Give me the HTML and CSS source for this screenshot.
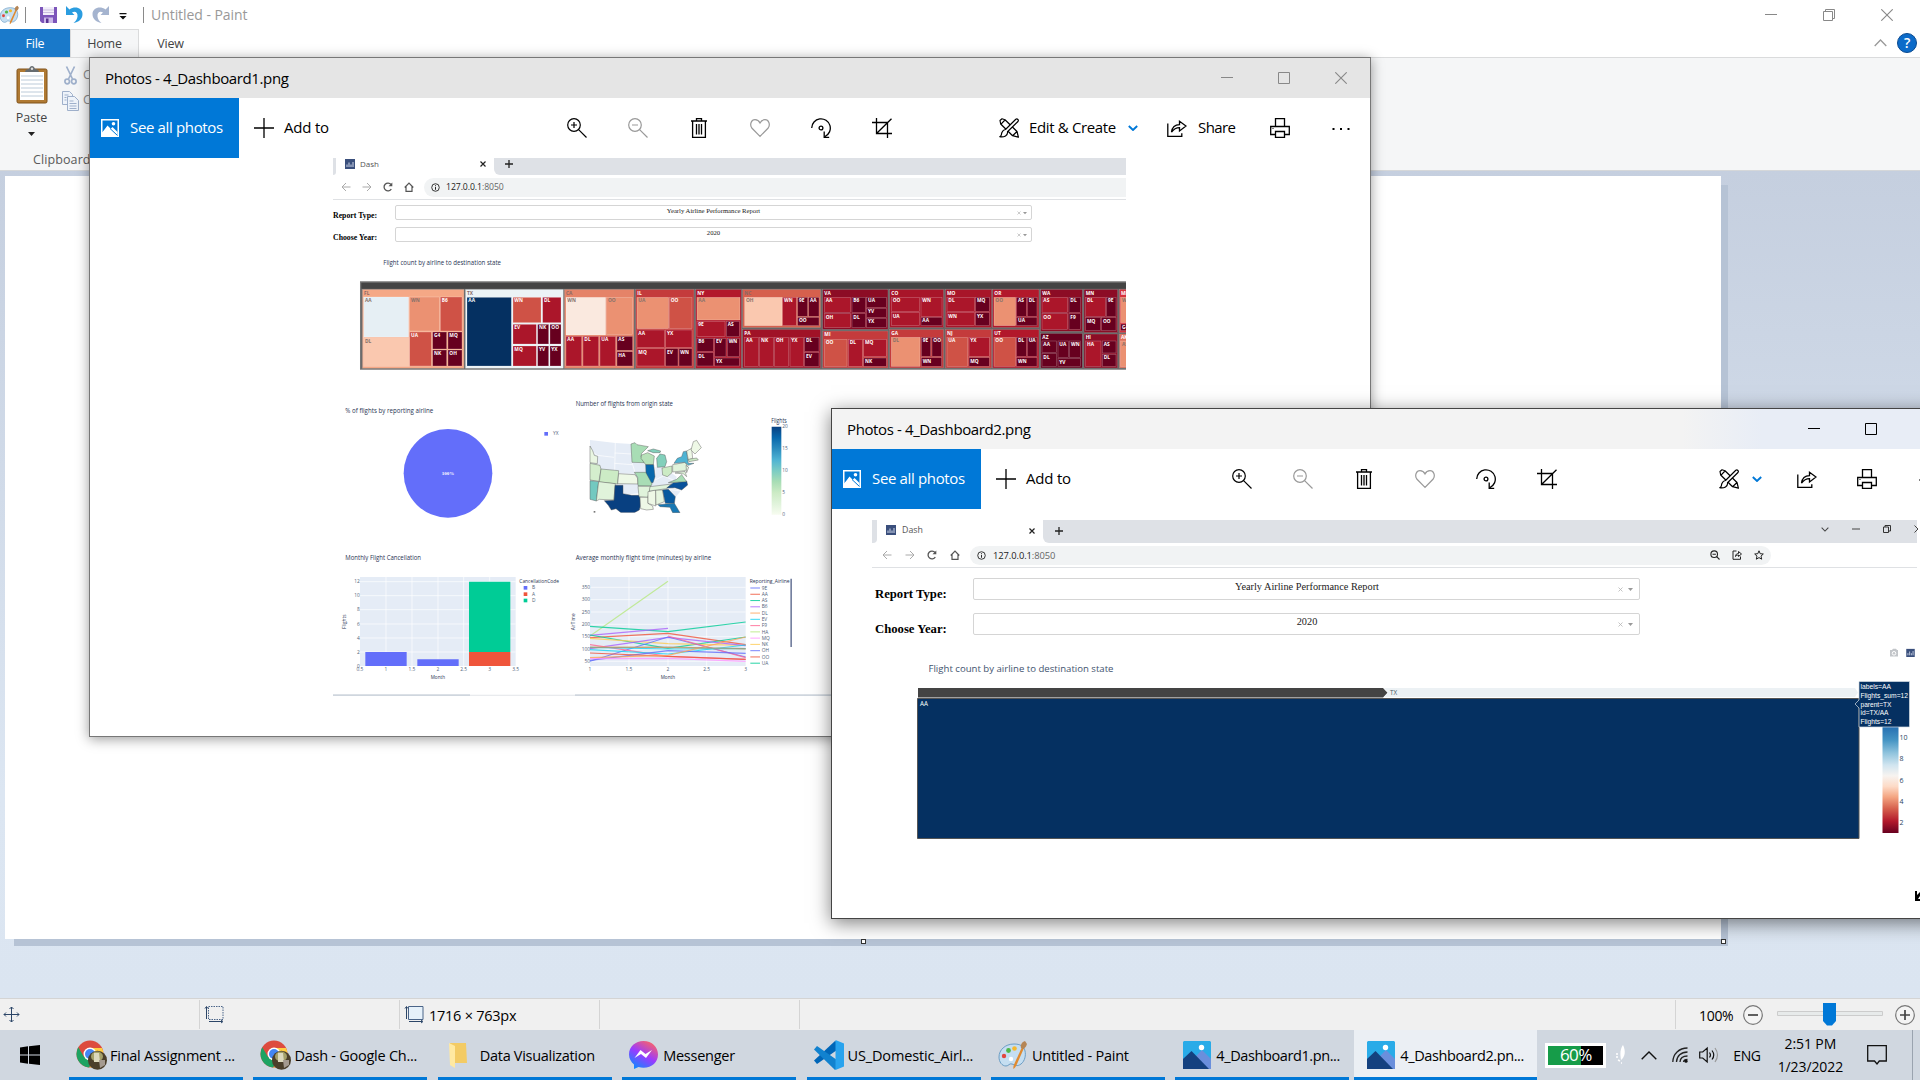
FILE: index.html
```html
<!DOCTYPE html>
<html lang="en">
<head>
<meta charset="utf-8">
<title>Untitled - Paint</title>
<link rel="stylesheet" href="styles.css">
</head>
<body>
<svg class="defs" width="0" height="0" aria-hidden="true">
  <defs>
    <symbol id="i-zoomin" viewBox="0 0 20 20"><g fill="none" stroke="currentColor" stroke-width="1.2"><circle cx="7" cy="7" r="6.3"/><path d="M11.6 11.6 19.5 19.5M7 4v6M4 7h6"/></g></symbol>
    <symbol id="i-zoomout" viewBox="0 0 20 20"><g fill="none" stroke="currentColor" stroke-width="1.2"><circle cx="7" cy="7" r="6.3"/><path d="M11.6 11.6 19.5 19.5M4 7h6"/></g></symbol>
    <symbol id="i-trash" viewBox="0 0 20 20"><g fill="none" stroke="currentColor" stroke-width="1.3"><path d="M2 3h16M7.500 3V.7h5V3M3.600 3v16.300h12.800V3M7.500 6v10.500M10 6v10.500M12.500 6v10.500"/></g></symbol>
    <symbol id="i-heart" viewBox="0 0 20 20"><path d="M10 18.300 1.800 10C-.6 6.500 1.300 1.700 5 1.700c2.300 0 4 1.200 5 3.200 1-2 2.700-3.200 5-3.200 3.700 0 5.600 4.800 3.200 8.300z" fill="none" stroke="currentColor" stroke-width="1.200"/></symbol>
    <symbol id="i-rotate" viewBox="0 0 20 20"><g fill="none" stroke="currentColor" stroke-width="1.300"><path d="M.7 10A9.300 9.300 0 1 1 14 18.500M13.200 13.500v5.800h5"/><circle cx="10" cy="10" r="1.900"/></g></symbol>
    <symbol id="i-crop" viewBox="0 0 20 20"><path d="M0 4.500h15.500V20M4.500 0v15.500H20M4.500 15.500 19.500.7" fill="none" stroke="currentColor" stroke-width="1.300"/></symbol>
    <symbol id="i-edit" viewBox="0 0 20 20"><g fill="#fff" stroke="currentColor" stroke-width="1.200" stroke-linejoin="round"><path d="M1 2.500 3 .8l3 1L18 13.500l1.400 5.700-5.800-1.500L1.700 6zM13.600 17.700 18 13.500M2 6.200 6 2"/><path d="M6.500 11.500 16.800 1.300c1.500-1 3.300.7 2.200 2.200L8.500 13.700c.7 3.500-3.500 6-7.800 5 2.300-.7 1.300-2 2.200-4.200.7-1.700 2-2.800 3.600-3z"/></g></symbol>
    <symbol id="i-share" viewBox="0 0 20 20"><path d="M.8 5.500v12.800h14v-3M4.500 14.200c.7-5 3.500-7.500 8-7.500V3.200L19 8l-6.500 5v-3.300c-3.500 0-5.700 1.300-8 4.500z" fill="none" stroke="currentColor" stroke-width="1.300"/></symbol>
    <symbol id="i-print" viewBox="0 0 20 20"><g fill="#fff" stroke="currentColor" stroke-width="1.300"><path d="M5.500 9V.7h9V9M.7 8.500h18.600v8H.7z"/><path d="M5.500 13.500h9v5.800h-9z"/></g><path d="M2.500 10.500h1" stroke="currentColor"/></symbol>
    <symbol id="i-plus" viewBox="0 0 20 20"><path d="M10 0v20M0 10h20" stroke="currentColor" stroke-width="1.300"/></symbol>
    <symbol id="i-plus-bold" viewBox="0 0 8 8"><path d="M4 0v8M0 4h8" stroke="currentColor" stroke-width="1.300"/></symbol>
    <symbol id="i-x-bold" viewBox="0 0 6 6"><path d="m.5.5 5 5m0-5-5 5" stroke="currentColor" stroke-width="1.200"/></symbol>
    <symbol id="i-more" viewBox="0 0 20 20"><path d="M1.500 11h2M9 11h2M16.500 11h2" stroke="currentColor" stroke-width="2"/></symbol>
    <symbol id="i-photo" viewBox="0 0 18 18"><path d="M0 0h18v18H0zM1.500 1.500v12L6.500 6.500l9.500 9.500h.5V1.500z" fill="#fff" fill-rule="evenodd"/><path d="m1.500 13 5-5.500L16 16.500H1.500z" fill="#fff"/><circle cx="12.500" cy="4.700" r="1.800" fill="#fff"/><path d="m9.500 10 2-2 5 5v3.500z" fill="#fff"/><path d="m9 9.500 7.500 7" stroke="#0078d7"/></symbol>
    <symbol id="i-chev" viewBox="0 0 10 6"><path d="m.8 1 4.200 4 4.200-4" fill="none" stroke="currentColor" stroke-width="1.900"/></symbol>
    <symbol id="i-min" viewBox="0 0 12 12"><path d="M0 5.500h12" stroke="currentColor"/></symbol>
    <symbol id="i-max" viewBox="0 0 12 12"><path d="M.5.5h11v11H.5z" fill="none" stroke="currentColor"/></symbol>
    <symbol id="i-restore" viewBox="0 0 12 12"><path d="M.5 2.500h9v9h-9zM2.500 2.500v-2h9v9h-2" fill="none" stroke="currentColor"/></symbol>
    <symbol id="i-close" viewBox="0 0 12 12"><path d="m.3.3 11.400 11.400M11.700.3.3 11.700" stroke="currentColor" stroke-width="1.100"/></symbol>
    <symbol id="i-dash" viewBox="0 0 10 10"><path d="M0 0h10v10H0z" fill="#3a4f7c"/><path d="M2 8V5.500M4 8V3.500M6 8V5.500M8 8V3" stroke="#cfd8ea" stroke-width="1"/></symbol>
    <symbol id="i-back" viewBox="0 0 10 10"><path d="M9.500 5H1M5 1 1 5l4 4" fill="none" stroke="currentColor"/></symbol>
    <symbol id="i-fwd" viewBox="0 0 10 10"><path d="M.5 5H9M5 1l4 4-4 4" fill="none" stroke="currentColor"/></symbol>
    <symbol id="i-reload" viewBox="0 0 10 10"><path d="M8.300 7A3.900 3.900 0 1 1 8 2.500" fill="none" stroke="currentColor" stroke-width="1.300"/><path d="M9.300.5V4.300H5.500z" fill="currentColor"/></symbol>
    <symbol id="i-home" viewBox="0 0 10 10"><path d="M2 4.500V9.300h6V4.500M.7 5.500 5 1.200l4.300 4.300" fill="none" stroke="currentColor" stroke-width="1.200"/></symbol>
    <symbol id="i-info" viewBox="0 0 10 10"><circle cx="5" cy="5" r="4.200" fill="none" stroke="currentColor"/><path d="M5 4.500v3M5 2.500v1.100" stroke="currentColor" stroke-width="1.100"/></symbol>
    <symbol id="i-star" viewBox="0 0 10 10"><path d="m5 .8 1.200 2.900 3.100.3L7 6.100l.7 3.100L5 7.600 2.300 9.200 3 6.100.7 4l3.100-.3z" fill="none" stroke="currentColor"/></symbol>
    <symbol id="i-palette" viewBox="0 0 30 30"><path d="M16 4C7 4 1 10 1 17c0 5 3 9 7 9 3 0 3-3 6-2 3 1 5 3 9 0 4-3 5-9 4-13-1-5-5-7-11-7z" fill="#c5def1" stroke="#6b9dc4"/><circle cx="6" cy="16" r="2.200" fill="#e2463e"/><circle cx="10.500" cy="10.500" r="2.400" fill="#4fb848"/><circle cx="16.500" cy="8.500" r="2.300" fill="#f5b92e"/><circle cx="13" cy="19" r="2.200" fill="#fff"/><path d="M15.500 29c-.5-2 .3-4 1.200-6L24 7l2 1-7 16c-1 2-2 4-3.500 5z" fill="#e08a30"/><path d="M23 8c-1-3 1-6 4-7l2 3c-1 3-2 4-4 5z" fill="#b58555"/></symbol>
    <symbol id="i-chrome" viewBox="0 0 32 30"><circle cx="14" cy="14" r="13.500" fill="#dd4b3e"/><path d="M2.300 7.300A13.500 13.500 0 0 0 13 27.500L18 19 8 17z" fill="#1da362"/><path d="M14 8h12a13.500 13.500 0 0 1-12.500 19.500L20 17z" fill="#ffcd41"/><circle cx="14" cy="14" r="6.500" fill="#fff"/><circle cx="14" cy="14" r="5" fill="#4486f4"/><circle cx="21.500" cy="20.300" r="9.500" fill="#4b3f2b"/><ellipse cx="21" cy="16.500" rx="6" ry="5" fill="#a4a06a"/><path d="M18 13h5l1 9h-6z" fill="#dcd8bd"/><path d="M23 20h6v5l-5 3z" fill="#a49a90"/></symbol>
    <symbol id="i-photos" viewBox="0 0 28 28"><path d="M1 0h26l1 1v26l-1 1H1l-1-1V1z" fill="#29abe8"/><path d="m13 15 6-6 9 9v10H15z" fill="#6a8fdc"/><path d="M0 18 8.500 10 26 28H0z" fill="#14417f"/><circle cx="18.500" cy="6.500" r="2.700" fill="#fff"/></symbol>
  </defs>
</svg>

<div class="desktop">
  <div class="paint">
    <div class="paint-title">
      <svg class="p-logo" width="21" height="20"><use href="#i-palette"/></svg>
      <i class="vline"></i>
      <svg class="p-save" width="17" height="16" viewBox="0 0 17 16"><path d="M0 0h17v16H2l-2-2z" fill="#7c55ba"/><path d="M3 0h11v8H3z" fill="#f2eefa"/><path d="M3 3h11M3 5.500h11" stroke="#c9bde0"/><path d="M4 10.500h9V16H4z" fill="#cbb9e8"/><path d="M6 11.500h2.500V16H6z" fill="#5a3494"/></svg>
      <svg class="p-undo" width="17" height="19" viewBox="0 0 17 19"><path d="M0 1v9h8.500L6 7.500c3-2 6 0 5.500 4-.3 2.500-1.500 4.500-4 6.500 6-1 9-4.500 9-9C16.500 3 9 .5 3.500 4.500z" fill="#2b9de0"/></svg>
      <svg class="p-redo" width="17" height="19" viewBox="0 0 17 19"><path d="M17 1v9H8.500L11 7.500c-3-2-6 0-5.500 4 .3 2.500 1.500 4.500 4 6.500-6-1-9-4.500-9-9C.5 3 8 .5 13.500 4.500z" fill="#a5b4cf"/></svg>
      <svg class="p-qat" width="8" height="7" viewBox="0 0 8 7"><path d="M.5 0h7v1.200h-7zM.5 3h7L4 6.500z" fill="#111"/></svg>
      <i class="vline"></i>
      <span class="p-name">Untitled - Paint</span>
      <div class="p-caption">
        <svg width="12" height="12"><use href="#i-min"/></svg><svg width="12" height="12"><use href="#i-restore"/></svg><svg width="12" height="12"><use href="#i-close"/></svg>
      </div>
    </div>
    <div class="tabs">
      <div class="tab file">File</div><div class="tab home">Home</div><div class="tab view">View</div>
      <div class="tabs-end">
        <svg width="13" height="8" viewBox="0 0 13 8"><path d="m.7 7 5.800-6 5.800 6" fill="none" stroke="#999" stroke-width="1.300"/></svg>
        <span class="help">?</span>
      </div>
    </div>
    <div class="ribbon">
      <div class="paste">
        <svg width="32" height="38" viewBox="0 0 32 38"><rect x="1" y="3" width="30" height="34" rx="1.500" fill="#b07a33" stroke="#80531b"/><path d="M4 6h24v28H4z" fill="#fff"/><path d="M5 10h22M5 14h22M5 18h22M5 22h22M5 26h22M5 30h22" stroke="#bccbd9"/><path d="M9 6c0-2 2-3 4-3 1-4 5-4 6 0 2 0 4 1 4 3z" fill="#666c70"/><circle cx="16" cy="2.800" r="1.200" fill="#ddd"/></svg>
        <span>Paste</span>
        <svg width="7" height="4" viewBox="0 0 7 4"><path d="M0 0h7L3.500 4z" fill="#222"/></svg>
      </div>
      <div class="clip-cmds">
        <div><svg width="13" height="19" viewBox="0 0 13 19"><g fill="none" stroke="#9fb0cb" stroke-width="1.700"><path d="M2.500.5 8.500 13M10.500.5 4.500 13"/><circle cx="3.200" cy="15.500" r="2.300"/><circle cx="9.800" cy="15.500" r="2.300"/></g></svg><span>Cut</span></div>
        <div class="copy"><svg width="17" height="20" viewBox="0 0 17 20"><g fill="#eef3fa" stroke="#9fb0cb"><path d="M.5.500h7l3 3v10H.5z"/><path d="M5.500 5.500h7l4 4v10h-11z"/></g><path d="M7.500 10h4M7.500 12.500h7M7.500 15h7M7.500 17.500h7M2.500 4h4M2.500 6.500h2M2.500 9h2" stroke="#9fb0cb"/></svg><span>Copy</span></div>
      </div>
      <span class="group-name">Clipboard</span>
    </div>
    <div class="workspace">
      <div class="canvas"></div>
      <i class="handle h-mid"></i><i class="handle h-corner"></i>
    </div>
    <div class="status">
      <div class="cell"><svg width="17" height="17" viewBox="0 0 17 17"><path d="M8.500 1v15M1 8.500h15M6.500 3l2-2 2 2M6.500 14l2 2 2-2M3 6.500l-2 2 2 2M14 6.500l2 2-2 2" fill="none" stroke="#2c4668"/></svg></div>
      <div class="cell"><svg width="19" height="17" viewBox="0 0 19 17"><path d="M3.500.5h14.500v13H3.500z" fill="none" stroke="#4a6488" stroke-dasharray="1.500 1"/><path d="M1.500 1v12M4 15.500h13M0 2.500l1.500-2 1.500 2M16 14l2 1.500-2 1.500" fill="none" stroke="#2c4668"/></svg></div>
      <div class="cell"><svg width="19" height="17" viewBox="0 0 19 17"><path d="M3.500.5h14.500v13H3.500z" fill="#e6f1fa" stroke="#4a6488"/><path d="M1.500 1v12M4 15.500h13M0 2.500l1.500-2 1.500 2M16 14l2 1.500-2 1.500" fill="none" stroke="#2c4668"/></svg><span>1716 × 763px</span></div>
      <div class="cell"></div>
      <div class="cell wide"></div>
      <div class="zoom">
        <span>100%</span>
        <svg width="20" height="20" viewBox="0 0 20 20"><circle cx="10" cy="10" r="9.300" fill="#f4f4f4" stroke="#777" stroke-width="1.200"/><path d="M5 10h10" stroke="#444" stroke-width="1.700"/></svg>
        <svg class="slider" width="106" height="23" viewBox="0 0 106 23"><path d="M.5 8.500h105v4H.5z" fill="#e7eaea" stroke="#ccc"/><path d="M46 0h13v18l-4 4.500h-5L46 18z" fill="#0078d7"/></svg>
        <svg width="20" height="20" viewBox="0 0 20 20"><circle cx="10" cy="10" r="9.300" fill="#f4f4f4" stroke="#777" stroke-width="1.200"/><path d="M5 10h10M10 5v10" stroke="#444" stroke-width="1.700"/></svg>
      </div>
    </div>
  </div>

  <div class="window win1">
    <div class="win-title"><span>Photos - 4_Dashboard1.png</span>
      <div class="caption"><svg width="12" height="12"><use href="#i-min"/></svg><svg width="12" height="12"><use href="#i-max"/></svg><svg width="12" height="12"><use href="#i-close"/></svg></div>
    </div>
    <div class="toolbar">
      <div class="see-all"><svg width="18" height="18"><use href="#i-photo"/></svg><span>See all photos</span></div>
      <div class="add-to"><svg width="20" height="20"><use href="#i-plus"/></svg><span>Add to</span></div>
      <div class="tools">
        <b><svg width="20" height="20"><use href="#i-zoomin"/></svg></b><b class="off"><svg width="20" height="20"><use href="#i-zoomout"/></svg></b><b><svg width="20" height="20"><use href="#i-trash"/></svg></b><b class="off"><svg width="20" height="20"><use href="#i-heart"/></svg></b><b><svg width="20" height="20"><use href="#i-rotate"/></svg></b><b><svg width="20" height="20"><use href="#i-crop"/></svg></b>
      </div>
      <div class="actions">
        <svg width="20" height="20"><use href="#i-edit"/></svg><span class="t-edit">Edit &amp; Create</span><svg class="chev" width="10" height="6"><use href="#i-chev"/></svg>
        <svg class="a-share" width="20" height="20"><use href="#i-share"/></svg><span class="t-share">Share</span>
        <svg class="a-print" width="20" height="20"><use href="#i-print"/></svg>
        <svg class="a-more" width="20" height="20"><use href="#i-more"/></svg>
      </div>
    </div>
    <div class="photo photo1">
      <div class="strip"><i class="prev"></i>
        <div class="btab"><svg width="10" height="10"><use href="#i-dash"/></svg><span>Dash</span><svg class="x" width="6" height="6"><use href="#i-x-bold"/></svg></div>
        <div class="rest"><svg width="8" height="8"><use href="#i-plus-bold"/></svg></div>
      </div>
      <div class="nav">
        <svg class="dim" width="10" height="10"><use href="#i-back"/></svg><svg class="dim" width="10" height="10"><use href="#i-fwd"/></svg><svg width="10" height="10"><use href="#i-reload"/></svg><svg width="10" height="10"><use href="#i-home"/></svg>
        <div class="pill"><svg width="9" height="9"><use href="#i-info"/></svg><span>127.0.0.1<em>:8050</em></span></div>
      </div>
      <div class="form">
        <label>Report Type:</label><div class="select"><span>Yearly Airline Performance Report</span><svg width="10" height="4" viewBox="0 0 10 4"><path d="m.5.5 3 3m0-3-3 3" stroke="#aaa" stroke-width=".6"/><path d="M6 1h4L8 3.300z" fill="#999"/></svg></div>
        <label>Choose Year:</label><div class="select"><span>2020</span><svg width="10" height="4" viewBox="0 0 10 4"><path d="m.5.5 3 3m0-3-3 3" stroke="#aaa" stroke-width=".6"/><path d="M6 1h4L8 3.300z" fill="#999"/></svg></div>
      </div>
      <svg class="charts" width="793" height="452" viewBox="333 246 793 452">
        <g transform="translate(320 150) scale(.33333)">
          <text class="ct" x="190" y="344" textLength="353" lengthAdjust="spacingAndGlyphs">Flight count by airline to destination state</text>
          <path d="M120 394h2298v265H120z" fill="#777"/><path d="M124 398h2294v258H124z" fill="#666"/><path d="M124 398h2294v18H124z" fill="#444"/>
          <svg x="120" y="394" width="2298" height="265" viewBox="120 394 2298 265"><g id="treemap"></g></svg>
        </g>
        <g id="lower" transform="translate(320 380) scale(.33333)">
          <defs>
            <linearGradient id="gnbu" x2="0" y2="1"><stop offset="0" stop-color="#084081"/><stop offset=".125" stop-color="#0868ac"/><stop offset=".25" stop-color="#2b8cbe"/><stop offset=".375" stop-color="#4eb3d3"/><stop offset=".5" stop-color="#7bccc4"/><stop offset=".625" stop-color="#a8ddb5"/><stop offset=".75" stop-color="#ccebc5"/><stop offset=".875" stop-color="#e0f3db"/><stop offset="1" stop-color="#f7fcf0"/></linearGradient>
          </defs>
          <text class="ct" x="76" y="98" textLength="264" lengthAdjust="spacingAndGlyphs">% of flights by reporting airline</text>
          <circle cx="384" cy="280" r="133" fill="#636efa"/>
          <text x="384" y="286" class="pct" text-anchor="middle">100%</text>
          <path d="M673 156h11v11h-11z" fill="#636efa"/><text class="tick" x="699" y="166">YX</text>

          <text class="ct" x="767" y="79" textLength="292" lengthAdjust="spacingAndGlyphs">Number of flights from origin state</text>
          <g stroke-linejoin="round">
            <path d="M810 180 886 189 935 192 938 247 975 250 980 270 1004 262 1026 262 1030 288 1056 280 1070 290 1066 308 1060 325 1083 332 1066 352 1040 330 909 345 884 312 810 300z" fill="#e5ecf6"/>
            <path d="M886 189 884 272M884 219 934 222M883 250 937 254M812 212 832 226 882 232M936 247 945 277M896 281 945 283M832 250 832 266M1005 262 1005 300M1005 300 1030 288 1060 300M1044 328l40 5" stroke="#fff" stroke-width="2" fill="none"/>
            <g stroke="#555" stroke-width="1.300">
              <path d="m810 198 8 14 5 14 10 3-1 22-22-3z" fill="#e9f6e2"/><path d="m810 250 30 6 3 12-6 36-27-4z" fill="#d4eecd"/><path d="m843 267 53 5-3 40-55-6z" fill="#ccebc5"/><path d="m810 302 26 3-7 58-19-5z" fill="#73c9c0"/><path d="m836 305 50 6-4 49-44-2-9 5z" fill="#e0f3db"/><path d="m896 281 49 3 8 11 1 17-61-1z" fill="#eef8e6"/>
              <path d="M885 316h24v25l26 5 23 0 3 14 0 18-3 12-15 8h-40l-15-12-14 4-9-14-12-14 29-1z" fill="#084081"/>
              <path d="m933 192 12-4 6 6 34 6-20 20-2 10 10 18-37-1z" fill="#a8ddb5"/><path d="m965 225 18-7 20 10-3 26h-23l-14-19z" fill="#b7e2b9"/><path d="M977 254h24l4 36-6 18-9 0-12-28z" fill="#0868ac"/><path d="m943 277 34 0 13 23 6 12-3 6-39-1-1-25z" fill="#a8ddb5"/><path d="m1012 262-2-27 10-13 15 3 5 20-5 15z" fill="#82d0bb"/><path d="m983 212 17-5 22 6-2 5h-20z" fill="#82d0bb"/>
              <path d="M954 319h38l-4 17-5 16-26-2z" fill="#e0f3db"/><path d="M960 352h24v18l14 8 2 10-20 2-18-4z" fill="#eef8e6"/><path d="m984 335 23-5v48l-23-8z" fill="#eef8e6"/><path d="m1007 330 21 0 5 35-25 10z" fill="#e6f5df"/><path d="m990 320 65-8-15 14-52 7z" fill="#e0f3db"/><path d="m1028 330 17-2 21 22-3 20h-27z" fill="#085a9f"/><path d="m1014 374 49-4 17 28h-22l-8-16-30-2z" fill="#1878b4"/><path d="m1040 324 20-16 40-5 3 12-18 15-20-7z" fill="#08519a"/><path d="m1045 308 25-10 15-14 15 21z" fill="#a8ddb5"/><path d="m1026 264 30-6v20l-14 12-14-5z" fill="#ccebc5"/><path d="m1058 254 38-7 8 15-8 10-38 4z" fill="#e0f3db"/><path d="m1062 250 10-15 13-5 5-15 10-2 5 37h17l-17 6-11-9z" fill="#4eb3d3"/><path d="m1098 256 8 6-6 16z" fill="#e6f5df"/><path d="m1100 213 15-8 3 30-13 5z" fill="#eef8e6"/><path d="m1113 210 7-25 10-4 14 22-19 19z" fill="#eef8e6"/><path d="m1105 238 25-4 5 6-28 5z" fill="#ccebc5"/><path d="m1065 279 30-5 5 16-9-8z" fill="#e0f3db"/>
            </g>
            <path d="M821 393h5v5h-5z" fill="#777"/><path d="M1040 399h45v5h-45zM880 398.500h80v5h-80z" fill="#fff"/>
          </g>
          <text class="ct" x="1354" y="130" textLength="46" lengthAdjust="spacingAndGlyphs">Flights</text>
          <path d="M1355 140h29v264h-29z" fill="url(#gnbu)"/>
          <g class="tick"><text x="1387" y="145">20</text><text x="1387" y="211">15</text><text x="1387" y="277">10</text><text x="1387" y="343">5</text><text x="1387" y="409">0</text></g>

          <text class="ct" x="76" y="541" textLength="227" lengthAdjust="spacingAndGlyphs">Monthly Flight Cancellation</text>
          <path d="M120 591h467v267H120z" fill="#e5ecf6"/>
          <path d="M120 605h467M120 647h467M120 689h467M120 732h467M120 774h467M120 816h467M198 591v267M276 591v267M354 591v267M431 591v267M509 591v267" stroke="#fff" stroke-width="2"/>
          <path d="M136 816h124v42H136zM292 838h124v20H292z" fill="#636efa"/><path d="M447 816h124v42H447z" fill="#ef553b"/><path d="M447 605h124v211H447z" fill="#00cc96"/>
          <g class="tick" text-anchor="end"><text x="119" y="610">12</text><text x="119" y="652">10</text><text x="119" y="694">8</text><text x="119" y="737">6</text><text x="119" y="779">4</text><text x="119" y="821">2</text><text x="119" y="863">0</text></g>
          <g class="tick" text-anchor="middle"><text x="120" y="872">0.5</text><text x="198" y="872">1</text><text x="276" y="872">1.5</text><text x="354" y="872">2</text><text x="431" y="872">2.5</text><text x="509" y="872">3</text><text x="587" y="872">3.5</text></g>
          <text class="ct ax" x="332" y="898" textLength="43" lengthAdjust="spacingAndGlyphs">Month</text><text class="ct ax" transform="translate(79 747) rotate(-90)" textLength="44" lengthAdjust="spacingAndGlyphs">Flights</text>
          <text class="ct ax" x="598" y="609" textLength="119" lengthAdjust="spacingAndGlyphs">CancellationCode</text>
          <path d="M611 618h11v11h-11z" fill="#636efa"/><path d="M611 637h11v11h-11z" fill="#ef553b"/><path d="M611 656h11v11h-11z" fill="#00cc96"/>
          <g class="tick"><text x="636" y="628">B</text><text x="636" y="647">A</text><text x="636" y="666">D</text></g>

          <text class="ct" x="767" y="541" textLength="407" lengthAdjust="spacingAndGlyphs">Average monthly flight time (minutes) by airline</text>
          <path d="M810 591h467v267H810z" fill="#e5ecf6"/>
          <path d="M810 622h467M810 659h467M810 696h467M810 733h467M810 770h467M810 807h467M810 844h467M927 591v267M1044 591v267M1160 591v267" stroke="#fff" stroke-width="2"/>
          <g id="airtime" fill="none" stroke-width="3.400" stroke-opacity=".8"></g>
          <g class="tick" text-anchor="end"><text x="810" y="627">350</text><text x="810" y="664">300</text><text x="810" y="701">250</text><text x="810" y="738">200</text><text x="810" y="775">150</text><text x="810" y="812">100</text><text x="810" y="849">50</text></g>
          <g class="tick" text-anchor="middle"><text x="810" y="872">1</text><text x="927" y="872">1.5</text><text x="1044" y="872">2</text><text x="1160" y="872">2.5</text><text x="1277" y="872">3</text></g>
          <text class="ct ax" x="1022" y="898" textLength="43" lengthAdjust="spacingAndGlyphs">Month</text><text class="ct ax" transform="translate(765 751) rotate(-90)" textLength="51" lengthAdjust="spacingAndGlyphs">AirTime</text>
          <text class="ct ax" x="1289" y="609" textLength="120" lengthAdjust="spacingAndGlyphs">Reporting_Airline</text>
          <g id="legend" class="tick"></g>
          <path d="M1411 596h5v205h-5z" fill="#7580a0"/>
          <path d="M39 943h411v5H39zM765 943h800v5H765z" fill="#cfd6de"/><path d="M450 944h315v3H450z" fill="#e2e5e9"/>
        </g>
      </svg>
    </div>
  </div>

  <div class="window win2">
    <div class="win-title"><span>Photos - 4_Dashboard2.png</span>
      <div class="caption"><svg width="12" height="12"><use href="#i-min"/></svg><svg width="12" height="12"><use href="#i-max"/></svg></div>
    </div>
    <div class="toolbar">
      <div class="see-all"><svg width="18" height="18"><use href="#i-photo"/></svg><span>See all photos</span></div>
      <div class="add-to"><svg width="20" height="20"><use href="#i-plus"/></svg><span>Add to</span></div>
      <div class="tools">
        <b><svg width="20" height="20"><use href="#i-zoomin"/></svg></b><b class="off"><svg width="20" height="20"><use href="#i-zoomout"/></svg></b><b><svg width="20" height="20"><use href="#i-trash"/></svg></b><b class="off"><svg width="20" height="20"><use href="#i-heart"/></svg></b><b><svg width="20" height="20"><use href="#i-rotate"/></svg></b><b><svg width="20" height="20"><use href="#i-crop"/></svg></b>
      </div>
      <div class="actions">
        <svg width="20" height="20"><use href="#i-edit"/></svg><svg class="chev" width="10" height="6"><use href="#i-chev"/></svg>
        <svg class="a-share" width="20" height="20"><use href="#i-share"/></svg>
        <svg class="a-print" width="20" height="20"><use href="#i-print"/></svg>
        <svg class="a-more" width="20" height="20"><use href="#i-more"/></svg>
      </div>
    </div>
    <div class="photo photo2">
      <div class="strip"><i class="prev"></i>
        <div class="btab"><svg width="10" height="10"><use href="#i-dash"/></svg><span>Dash</span><svg class="x" width="6" height="6"><use href="#i-x-bold"/></svg></div>
        <div class="rest"><svg width="8" height="8"><use href="#i-plus-bold"/></svg>
          <div class="strip-caption"><svg width="8" height="5" viewBox="0 0 10 6"><path d="m.8.8 4.200 4.200L9.200.8" fill="none" stroke="#444" stroke-width="1.300"/></svg><svg width="8" height="8" viewBox="0 0 8 8"><path d="M0 4h8" stroke="#444"/></svg><svg width="8" height="8" viewBox="0 0 8 8"><path d="M.5 2h5v5.500h-5zM2 2V.5h5.500V6H5.500" fill="none" stroke="#333"/></svg><svg width="5" height="8" viewBox="0 0 5 8"><path d="m.5.500 3.500 3.500L.5 7.500" fill="none" stroke="#444"/></svg></div>
        </div>
      </div>
      <div class="nav">
        <svg class="dim" width="10" height="10"><use href="#i-back"/></svg><svg class="dim" width="10" height="10"><use href="#i-fwd"/></svg><svg width="10" height="10"><use href="#i-reload"/></svg><svg width="10" height="10"><use href="#i-home"/></svg>
        <div class="pill"><svg width="9" height="9"><use href="#i-info"/></svg><span>127.0.0.1<em>:8050</em></span>
          <div class="pill-end"><svg width="10" height="10" viewBox="0 0 10 10"><g fill="none" stroke="currentColor" stroke-width="1.100"><circle cx="4.200" cy="4.200" r="3.300"/><path d="m6.700 6.700 2.800 2.800M2.500 4.200h3.400"/></g></svg><svg width="10" height="10" viewBox="0 0 10 10"><path d="M4.500 1H1v8.300h7.500V6.500M3.500 6.500c.2-2.500 1.500-3 3-3V1.500L9.500 4 6.500 6.500V5c-1.200 0-2 .3-3 1.500z" fill="none" stroke="currentColor"/></svg><svg width="10" height="10"><use href="#i-star"/></svg></div>
        </div>
      </div>
      <div class="form">
        <label>Report Type:</label><div class="select"><span>Yearly Airline Performance Report</span><svg width="15" height="5" viewBox="0 0 15 5"><path d="m.5.500 4 4m0-4-4 4" stroke="#b5b5b5" stroke-width=".8"/><path d="M10 1h5l-2.500 3z" fill="#999"/></svg></div>
        <label>Choose Year:</label><div class="select"><span>2020</span><svg width="15" height="5" viewBox="0 0 15 5"><path d="m.5.500 4 4m0-4-4 4" stroke="#b5b5b5" stroke-width=".8"/><path d="M10 1h5l-2.500 3z" fill="#999"/></svg></div>
      </div>
      <svg class="charts" width="1048" height="270" viewBox="872 640 1048 270">
        <defs><linearGradient id="rdbu" x2="0" y2="1"><stop offset="0" stop-color="#2670b2"/><stop offset=".12" stop-color="#4393c3"/><stop offset=".25" stop-color="#92c5de"/><stop offset=".36" stop-color="#d1e5f0"/><stop offset=".46" stop-color="#f7f3f0"/><stop offset=".56" stop-color="#fddbc7"/><stop offset=".66" stop-color="#f4a582"/><stop offset=".77" stop-color="#d6604d"/><stop offset=".89" stop-color="#b2182b"/><stop offset="1" stop-color="#67001f"/></linearGradient></defs>
        <path d="M1890 650h2l1-1.300h3l1 1.300h1v6.500h-8z" fill="#c2c5c9"/><circle cx="1894" cy="653.300" r="1.800" fill="none" stroke="#fff"/>
        <svg x="1906" y="648.500" width="9" height="8.500"><use href="#i-dash" width="9" height="8.500"/></svg>
        <text class="title2" x="928.500" y="672" textLength="185" lengthAdjust="spacingAndGlyphs">Flight count by airline to destination state</text>
        <path d="M918 688h465l4.500 4.700-4.500 4.800H918z" fill="#444"/><path d="M1384 688h471l3 4.500-3 4.500h-471l4-4.500z" fill="#ecf1f4"/>
        <text class="lab2" x="1390" y="695" fill="#456">TX</text>
        <path d="M917.500 698.500h941.500v140H917.500z" fill="#053061" stroke="#555"/>
        <text class="lab2" x="920" y="706" fill="#fff">AA</text>
        <path d="M1882.500 727h16v106h-16z" fill="url(#rdbu)"/>
        <g class="bar2"><text x="1899.500" y="739.500">10</text><text x="1899.500" y="761">8</text><text x="1899.500" y="782.500">6</text><text x="1899.500" y="803.500">4</text><text x="1899.500" y="825">2</text></g>
        <path d="M1859 681.500h50.500v45.500H1859v-19l-4-4 4-4z" fill="#053061" stroke="#d6dde4" stroke-width=".7"/>
        <g class="tip"><text x="1860.500" y="689" textLength="30.500" lengthAdjust="spacingAndGlyphs">labels=AA</text><text x="1860.500" y="697.700" textLength="47.500" lengthAdjust="spacingAndGlyphs">Flights_sum=12</text><text x="1860.500" y="706.600" textLength="31" lengthAdjust="spacingAndGlyphs">parent=TX</text><text x="1860.500" y="715.300" textLength="28" lengthAdjust="spacingAndGlyphs">id=TX/AA</text><text x="1860.500" y="724.100" textLength="31" lengthAdjust="spacingAndGlyphs">Flights=12</text></g>
        <path d="M1915 891h2v4l3-3v4l-2 3h2v2h-5z" fill="#000"/>
      </svg>
    </div>
  </div>

  <div class="taskbar">
    <div class="start"><svg width="20" height="20" viewBox="0 0 20 20"><path d="M0 2.500 8 1.300v8.200H0zM9 1.200 20 0v9.500H9zM0 10.500h8v8.200L0 17.500zM9 10.500h11V20L9 18.800z"/></svg></div>
    <div class="task"><svg class="i-left" width="32" height="30"><use href="#i-chrome"/></svg><span>Final Assignment ...</span></div>
    <div class="task"><svg class="i-left" width="32" height="30"><use href="#i-chrome"/></svg><span>Dash - Google Ch...</span></div>
    <div class="task"><svg width="30" height="28" viewBox="0 0 30 28"><path d="M6 2h16l1 20H7z" fill="#f3cb65"/><path d="M5 2 11 5v22l-5-3z" fill="#ffe9a2"/></svg><span>Data Visualization</span></div>
    <div class="task"><svg width="30" height="30" viewBox="0 0 30 30"><defs><linearGradient id="msg" x1=".2" y1="1" x2=".8" y2="0"><stop offset="0" stop-color="#0a8cff"/><stop offset=".5" stop-color="#9a3bff"/><stop offset="1" stop-color="#ff6560"/></linearGradient></defs><path d="M14.500 1C6.500 1 0 6.500 0 14.500c0 4 2 7.500 5 10V29l4.500-2c1.500.5 3.500.8 5 .8C23 27.800 29 22 29 14.500S23 1 14.500 1z" fill="url(#msg)"/><path d="m5.500 18 6-8 5 4 6.500-4-6 8-5-4z" fill="#fff"/></svg><span>Messenger</span></div>
    <div class="task"><svg width="30" height="30" viewBox="0 0 30 30"><path d="M0 20.500 21 1l2 1v8L3 24z" fill="#0066b8"/><path d="M0 9.500 3 6l20 14v8l-2 2z" fill="#1182cf"/><path d="m21.500 0 8.500 3.500v23L21.500 30z" fill="#28a3ee"/></svg><span>US_Domestic_Airl...</span></div>
    <div class="task"><svg width="30" height="30"><use href="#i-palette"/></svg><span>Untitled - Paint</span></div>
    <div class="task"><svg width="28" height="28"><use href="#i-photos"/></svg><span class="t2">4_Dashboard1.pn...</span></div>
    <div class="task active"><svg width="28" height="28"><use href="#i-photos"/></svg><span class="t2">4_Dashboard2.pn...</span></div>
    <div class="tray">
      <div class="battery"><span>60%</span></div>
      <svg class="leaf" width="12" height="22" viewBox="0 0 12 22"><path d="M8 1c3 6 2 12-2 15-1-6-1-11 2-15z" fill="#fff"/><path d="M2 9v2M1 13h2M3 16l2 1M6 19h1" stroke="#fff" stroke-width="1.500"/></svg>
      <svg class="up" width="16" height="9" viewBox="0 0 16 9"><path d="m.7 8.300 7.300-7.300 7.300 7.300" fill="none" stroke="#111" stroke-width="1.400"/></svg>
      <svg class="wifi" width="16" height="16" viewBox="0 0 16 16"><g fill="none" stroke="#222" stroke-width="1.300"><path d="M.8 15C1 7 7 1 15.500 1M4.500 15C4.700 9 9 5 15.500 5M8 15c.2-3.500 3-6 7.500-6M11.500 15c.2-1.500 1.500-2.500 4-2.500"/></g><circle cx="14" cy="14.200" r="1.600" fill="#111"/></svg>
      <svg class="vol" width="20" height="18" viewBox="0 0 20 18"><g fill="none" stroke="#111" stroke-width="1.200"><path d="M.7 6v6h3l4.500 4V2L3.700 6zM10.500 6.500q2 2.500 0 5M13 4.500q3.500 4.500 0 9"/><path d="M16 2q5 7 0 14" stroke="#999"/></g></svg>
      <span class="lang">ENG</span>
      <div class="clock"><span>2:51 PM</span><span>1/23/2022</span></div>
      <svg class="note" width="20" height="20" viewBox="0 0 20 20"><path d="M.7.7h18.600v15.300h-7L10 19l-2.500-3H.7z" fill="none" stroke="#111" stroke-width="1.300"/></svg>
      <i class="peek"></i>
    </div>
  </div>
</div>
<script src="charts.js"></script>
</body>
</html>
```
FILE: styles.css
```css
* { box-sizing: border-box; }
body { margin: 0; font-family: "Open Sans", "Noto Sans", sans-serif; color: #000; }
svg { display: block; flex: none; overflow: visible; }
svg svg { overflow: hidden; }
.defs { position: absolute; }
.desktop { position: relative; width: 1920px; height: 1080px; overflow: hidden; display: flex; flex-direction: column; }

/* Paint */
.paint { height: 1030px; display: flex; flex-direction: column; background: #fff; }
.paint-title { height: 29px; display: flex; align-items: center; }
.vline { width: 1px; height: 16px; background: #8a8a8a; }
.p-logo { margin: 0 5px 0 -1px; }
.paint-title .vline + .p-save { margin-left: 14px; }
.p-undo { margin-left: 9px; }
.p-redo { margin-left: 9px; }
.p-qat { margin: 3px 16px 0 10px; }
.p-name { margin-left: 7px; font-size: 14px; letter-spacing: -.05px; color: #999; }
.p-caption { margin: 0 27px 0 auto; display: flex; gap: 46px; color: #888; }
.tabs { height: 28px; display: flex; align-items: stretch; font-size: 12.5px; letter-spacing: -.25px; color: #444; }
.tab { display: flex; align-items: center; justify-content: center; }
.file { width: 70px; background: #1979ca; color: #fff; }
.home { width: 69px; background: #f5f6f7; border: 1px solid #dadbdc; border-bottom: 0; }
.view { width: 63px; }
.tabs-end { margin: 0 3px 0 auto; display: flex; align-items: center; gap: 10px; }
.help { width: 20px; height: 20px; border-radius: 50%; background: #0c6bc9; border: 1px solid #0a4a90; color: #fff; font-size: 14px; font-weight: 600; line-height: 18px; text-align: center; }
.ribbon { height: 114px; background: #f5f6f7; border-top: 1px solid #dadbdc; border-bottom: 1px solid #d5d7d9; display: grid; grid-template-columns: 62px 1fr; grid-template-rows: 90px 22px; font-size: 12.500px; letter-spacing: -.1px; color: #444; }
.paste { display: flex; flex-direction: column; align-items: center; padding: 8px 0 0 1px; }
.paste span { margin-top: 5px; line-height: 18px; }
.paste svg + span + svg { margin-top: 5px; }
.clip-cmds { padding-top: 8px; color: #8a8a8a; }
.clip-cmds div { display: flex; gap: 6px; height: 25px; padding-left: 2px; }
.clip-cmds .copy { padding-left: 0; gap: 4px; }
.group-name { grid-column: 1 / 3; padding-left: 33px; line-height: 24px; color: #5a5a5a; letter-spacing: .1px; }
.workspace { position: relative; height: 827px; padding: 5px 0 0 5px; background: linear-gradient(#c5cfdf, #dce6f2 75%, #dbe5f1); }
.canvas { width: 1716px; height: 763px; background: #fff; box-shadow: 8px 8px 0 -1px #b6c3d5; }
.handle { position: absolute; width: 5px; height: 5px; background: #fff; border: 1px solid #333; }
.h-mid { left: 861px; top: 768px; }
.h-corner { left: 1721px; top: 768px; }
.status { height: 32px; border-top: 1px solid #d4d4d4; background: #f0f0f0; display: flex; font-size: 14.500px; letter-spacing: -.25px; }
.cell { width: 200px; border-right: 1px solid #d4d4d4; margin: 1px 0; padding: 6px 0 0 5px; display: flex; gap: 5px; }
.cell:first-child { padding-left: 3px; }
.cell span { line-height: 20px; }
.wide { width: 876px; }
.zoom { width: 243px; display: flex; align-items: center; padding-left: 23px; }
.zoom span { width: 44px; padding-top: 2px; font-size: 14px; letter-spacing: -.300px; }
.slider { margin: 0 12px 0 14px; }

/* Photos windows */
.window { position: absolute; background: #fff; border: 1px solid #777; display: flex; flex-direction: column; }
.win1 { left: 89px; top: 57px; width: 1282px; height: 680px; box-shadow: 0 2px 12px rgba(0,0,0,.4); }
.win2 { left: 831px; top: 408px; width: 1160px; height: 511px; border-color: #444; box-shadow: 0 4px 18px rgba(0,0,0,.5); }
.win-title { height: 40px; flex: none; display: flex; align-items: center; padding-left: 15px; font-size: 15px; letter-spacing: -.38px; background: #e5e5e5; }
.win2 .win-title { background: linear-gradient(90deg, #f3f3f3 850px, #e8edf6 930px); }
.caption { margin-left: auto; margin-right: 23px; display: flex; gap: 45px; color: #888; }
.win2 .caption { color: #000; margin-right: 113px; }
.toolbar { height: 60px; flex: none; display: flex; align-items: center; font-size: 15px; letter-spacing: -.35px; }
.toolbar span { position: relative; top: -1px; }
.see-all { width: 149px; height: 60px; background: #0078d7; color: #fff; display: flex; align-items: center; padding-left: 11px; gap: 11px; }
.add-to { width: 106px; padding-left: 15px; display: flex; align-items: center; gap: 10px; letter-spacing: -.2px; }
.tools { margin-left: 201px; display: flex; }
.win2 .tools { margin-left: 124px; }
.tools b { width: 61px; display: flex; justify-content: center; }
.off { color: #999; }
.actions { display: flex; align-items: center; margin-left: 87px; }
.win2 .actions { margin-left: 142px; }
.t-edit { width: 89px; margin-left: 10px; white-space: nowrap; }
.chev { color: #0078d7; margin-left: 10px; }
.win2 .chev { margin-left: 13px; }
.a-share { margin-left: 29px; }
.win2 .a-share { margin-left: 35px; }
.t-share { width: 40px; margin-left: 11px; letter-spacing: -.6px; }
.a-print { margin-left: 32px; }
.win2 .a-print { margin-left: 40px; }
.a-more { margin-left: 41px; }

/* browser captures shown in the viewer */
.photo { display: flex; flex-direction: column; letter-spacing: 0; }
.photo1 { width: 793px; margin-left: 243px; }
.photo2 { width: 1045px; margin: 11px 0 0 40px; }
.strip { height: 17px; display: flex; background: #fff; }
.prev { width: 3px; background: #dee1e6; border-bottom-right-radius: 4px; }
.btab { width: 158px; display: flex; align-items: flex-start; padding: 1px 0 0 9px; font-size: 8px; color: #555; line-height: 10px; }
.btab span { margin-left: 5px; }
.btab .x { margin: 2px 8px 0 auto; color: #222; }
.rest { flex: 1; background: #dee1e6; border-bottom-left-radius: 6px; padding: 2px 0 0 11px; color: #222; display: flex; }
.nav { height: 25px; border-bottom: 1px solid #dfe1e4; display: flex; align-items: center; padding-left: 8px; gap: 11px; color: #555; }
.dim { color: #aaa; }
.pill { flex: 1; height: 19px; margin-left: -1px; background: #f1f3f4; border-radius: 10px 0 0 10px; display: flex; align-items: center; padding-left: 7px; gap: 6px; font-size: 8.700px; letter-spacing: -.08px; color: #222; }
.pill em { font-style: normal; color: #666; }
.form { display: grid; grid-template-columns: 62px 637px; grid-auto-rows: 15px; row-gap: 7px; padding-top: 5px; height: 46px; font-family: "Liberation Serif", serif; }
.form label { padding: 5px 0 0 0; font-size: 7.800px; line-height: 12px; font-weight: bold; white-space: nowrap; }
.select { border: 1px solid #d5d5d5; border-radius: 2px; display: flex; align-items: center; font-size: 6.700px; color: #222; padding-right: 4px; }
.select span { flex: 1; text-align: center; line-height: 10px; margin-top: -3px; padding-left: 14px; }
.charts { flex: none; }
.ct { font: 19px "Open Sans", sans-serif; fill: #1f3352; }
.ax { font-size: 16px; }
.tick { font: 14.500px "Open Sans", sans-serif; fill: #4e5e78; }
.pct { font: bold 15px "Liberation Serif", serif; fill: #fff; }
.lbl { font: bold 14.500px "Open Sans", sans-serif; }

.photo2 .strip { height: 23px; }
.photo2 .prev { width: 5px; }
.photo2 .btab { width: 166px; padding: 5px 0 0 9px; font-size: 8.800px; }
.photo2 .btab span { margin-left: 6px; }
.photo2 .btab .x { margin-right: 8px; margin-top: 3px; }
.photo2 .rest { padding: 7px 0 0 12px; }
.strip-caption { display: flex; margin-left: auto; gap: 23px; align-items: center; height: 8px; margin-top: -2px; margin-right: -2px; }
.photo2 .nav { padding-left: 10px; gap: 12.500px; }
.photo2 .pill { flex: none; width: 801px; border-radius: 10px; margin-left: -2px; font-size: 9.400px; gap: 7px; }
.pill-end { display: flex; gap: 12px; margin-left: auto; margin-right: 7px; }
.photo2 .form { grid-template-columns: 101px 667px; grid-auto-rows: 22px; row-gap: 13px; padding-top: 10px; height: 72px; }
.photo2 .form label { font-size: 12.700px; padding: 10px 0 0 3px; }
.photo2 .select { font-size: 10.300px; padding-right: 6px; }
.photo2 .select span { margin-top: -4px; padding-left: 22px; }
.title2 { font: 9.500px "Open Sans", sans-serif; fill: #42536f; }
.lab2 { font: 6.300px "Open Sans", sans-serif; }
.bar2 { font: 7px "Open Sans", sans-serif; fill: #2a3f5f; }
.tip { font: 7px "Liberation Sans", sans-serif; fill: #fff; }

/* taskbar */
.taskbar { height: 50px; display: flex; background: #d0d7e0; font-size: 14.500px; letter-spacing: -.25px; }
.start { width: 69px; padding: 15px 0 0 20px; }
.task { width: 174px; height: 50px; margin-right: 10.400px; border-bottom: 3px solid #0078d7; display: flex; align-items: center; gap: 4px; padding: 3px 0 0 7px; white-space: nowrap; flex: none; }
.task span { flex: none; }
.task .i-left { margin-right: -2px; }
.task:nth-child(4) { padding-left: 6px; letter-spacing: -.3px; }
.task:nth-child(4) span { margin-left: 2px; }
.task:nth-child(6) { letter-spacing: -.15px; }
.task:nth-child(8) { padding-left: 8px; margin-right: 5px; }
.task .t2 { letter-spacing: -.400px; margin-left: 1px; }
.active { width: 183px; background: #ebeff4; padding-left: 13px; margin-right: 0; }
.tray { flex: 1; display: flex; align-items: center; padding-left: 8px; }
.battery { width: 61px; height: 25px; border: 3px solid #fff; background: linear-gradient(90deg, #169c49 60%, #000 60%); color: #fff; font-size: 17px; letter-spacing: -.6px; line-height: 18px; text-align: center; }
.leaf { margin-left: 9px; }
.up { margin-left: 14px; }
.wifi { margin-left: 15px; }
.vol { margin-left: 11px; }
.lang { margin-left: 14px; width: 30px; font-size: 14px; letter-spacing: -.4px; }
.clock { width: 76px; margin-left: 9px; display: flex; flex-direction: column; align-items: center; font-size: 14px; line-height: 23px; letter-spacing: -.1px; }
.note { margin-left: 19px; }
.peek { width: 1px; height: 50px; background: #9aa3af; margin-left: 25px; }
```
FILE: charts.js
```js
(function () {
  const NS = 'http://www.w3.org/2000/svg';
  const add = (parent, tag, attrs, text) => {
    const el = document.createElementNS(NS, tag);
    for (const k in attrs) el.setAttribute(k, attrs[k]);
    if (text) el.textContent = text;
    parent.appendChild(el);
    return el;
  };
  const colors = { d: '#67001f', r: '#ab162a', m: '#cf5246', s: '#eb9172', p: '#fac8af', w: '#fae9df', b: '#e6eff4', n: '#053061' };

  // state: [name, fill, dark label, x1, y1, x2, y2, "airline color x1 y1 x2 y2; ..."]
  const states = [
    ['FL', '#f5a886', 1, 127, 418, 432, 655, 'AA b 131 441 266 561;DL p 131 563 268 649;WN s 269 441 358 543;B6 m 361 441 426 543;UA m 269 546 334 648;G4 d 338 546 380 597;MQ d 384 546 426 597;NK d 338 600 380 648;OH d 384 600 426 648'],
    ['TX', '#ecf3f6', 1, 436, 418, 730, 655, 'AA n 441 442 574 648;WN m 579 442 663 518;DL r 668 442 723 518;EV r 579 523 649 582;NK d 653 523 686 582;OO d 690 523 723 582;MQ r 579 588 649 648;YV d 653 588 686 648;YX d 690 588 723 648'],
    ['CA', '#e58368', 1, 733, 418, 942, 655, 'WN w 738 442 857 555;OO s 860 442 938 553;AA r 738 559 785 648;DL r 789 559 836 648;UA r 840 559 887 648;AS d 891 559 938 601;HA d 891 605 938 648'],
    ['IL', '#c43b3c', 0, 947, 418, 1122, 655, 'UA s 951 442 1046 536;OO m 1048 442 1116 536;AA r 951 540 1034 592;YX r 1037 540 1116 592;MQ r 951 596 1034 648;EV d 1037 596 1074 648;WN d 1077 596 1116 648'],
    ['NY', '#b2182b', 0, 1127, 418, 1264, 655, 'AA s 1131 442 1260 510;9E r 1131 514 1215 560;AS d 1219 514 1258 560;B6 d 1131 565 1180 604;EV d 1184 565 1218 620;WN d 1222 565 1258 620;DL d 1131 608 1180 648;YX d 1184 624 1258 648'],
    ['NC', '#d6604d', 1, 1268, 418, 1502, 533, 'OH p 1274 442 1386 527;WN r 1388 442 1429 527;9E d 1433 442 1463 499;AA d 1466 442 1497 499;OO d 1433 502 1497 527'],
    ['PA', '#a01227', 0, 1268, 538, 1502, 654, 'AA r 1274 562 1315 649;NK r 1319 562 1360 649;OH r 1364 562 1406 649;YX r 1410 562 1450 649;DL d 1454 562 1497 604;EV d 1454 608 1497 649'],
    ['VA', '#8c0c25', 0, 1508, 418, 1704, 538, 'AA r 1513 442 1592 487;OH r 1513 491 1592 533;B6 d 1596 442 1636 487;DL d 1596 491 1636 533;UA d 1640 442 1699 472;YV d 1640 475 1699 502;YX d 1640 505 1699 533'],
    ['MI', '#c43b3c', 0, 1508, 543, 1704, 654, 'OO m 1513 568 1581 649;DL r 1585 568 1627 649;MQ r 1631 568 1699 620;NK d 1631 624 1699 649'],
    ['CO', '#a81529', 0, 1709, 418, 1871, 533, 'OO r 1714 442 1799 484;UA r 1714 488 1799 527;WN r 1803 442 1866 499;AA d 1803 502 1866 527'],
    ['GA', '#c43b3c', 0, 1709, 538, 1871, 654, 'DL s 1714 562 1800 649;9E d 1804 562 1832 619;OO d 1836 562 1865 619;WN d 1804 623 1865 649'],
    ['MO', '#a81529', 0, 1876, 418, 2015, 533, 'DL r 1881 442 1963 484;WN r 1881 488 1963 527;MQ d 1967 442 2008 484;YX d 1967 488 2008 527'],
    ['NJ', '#c43b3c', 0, 1876, 538, 2015, 654, 'UA m 1881 562 1943 649;YX r 1947 562 2008 619;MQ d 1947 623 2008 649'],
    ['OR', '#b2182b', 0, 2018, 418, 2157, 533, 'OO s 2022 442 2087 527;AS d 2090 442 2119 499;DL d 2122 442 2151 499;UA d 2090 502 2151 527'],
    ['UT', '#b2182b', 0, 2018, 538, 2157, 654, 'OO m 2022 562 2087 649;DL d 2090 562 2119 619;UA d 2122 562 2151 619;WN d 2090 623 2151 649'],
    ['WA', '#8c0c25', 0, 2162, 418, 2287, 544, 'AS r 2166 442 2243 487;OO r 2166 491 2243 538;DL d 2247 442 2282 487;F9 d 2247 491 2282 538'],
    ['AZ', '#67001f', 0, 2162, 550, 2287, 654, 'AA d 2166 573 2210 607;DL d 2166 611 2210 649;UA d 2214 573 2245 622;WN d 2249 573 2282 622;YV d 2214 626 2282 649'],
    ['MN', '#8c0c25', 0, 2292, 418, 2393, 548, 'DL r 2297 442 2356 499;9E d 2360 442 2388 499;MQ d 2297 503 2341 542;OO d 2345 503 2388 542'],
    ['HI', '#8c0c25', 0, 2292, 552, 2393, 654, 'HA r 2297 573 2343 649;AS d 2347 573 2388 609;DL d 2347 613 2388 649'],
    ['MD', '#d6323c', 0, 2398, 418, 2440, 548, 'WN s 2402 442 2440 518;G4 d 2402 522 2440 542'],
    ['AK', '#e0705a', 0, 2398, 552, 2440, 654, 'AS s 2402 573 2440 649']
  ];
  const map = document.getElementById('treemap');
  for (const [name, fill, dark, x1, y1, x2, y2, kids] of states) {
    add(map, 'rect', { x: x1, y: y1, width: x2 - x1, height: y2 - y1, fill, stroke: '#999', 'stroke-width': 1 });
    add(map, 'text', { x: x1 + 5, y: y1 + 16, class: 'lbl', fill: dark ? '#8a6a66' : '#fff' }, name);
    for (const kid of kids.split(';')) {
      const [code, c, a, b, e, f] = kid.split(' ');
      add(map, 'rect', { x: a, y: b, width: e - a, height: f - b, fill: colors[c], stroke: '#fff', 'stroke-opacity': .35, 'stroke-width': 1.8 });
      add(map, 'text', { x: +a + 4, y: +b + 15, class: 'lbl', fill: 'bpws'.includes(c) ? '#86716c' : '#fff' }, code);
    }
  }

  const lines = [
    ['#b6e880', '810,768 1044,604'], ['#00cc96', '810,739 1044,755 1277,726'], ['#ab63fa', '810,766 1044,745'],
    ['#ef553b', '810,773 1044,760 1277,794'], ['#00cc96', '810,765 1044,805 1277,771'], ['#fecb52', '810,775 1044,791 1277,796'],
    ['#ab63fa', '810,806 1044,772 1277,797'], ['#636efa', '810,844 1044,771 1277,831'], ['#ff6692', '810,794 1044,829 1277,838'],
    ['#ff6692', '1044,768 1277,833'], ['#19d3f3', '810,809 1044,822 1277,795'], ['#ffa15a', '810,801 1044,803 1277,807'],
    ['#636efa', '810,841 1044,812 1277,820'], ['#19d3f3', '810,802 1044,807 1277,806'], ['#ef553b', '810,819 1044,829 1277,838'],
    ['#ffa15a', '810,833 1044,826 1277,771'], ['#ff97ff', '810,836 1044,835 1277,844'], ['#ab9870', '810,803 1044,801 1277,806']
  ];
  const air = document.getElementById('airtime');
  for (const [stroke, points] of lines) add(air, 'polyline', { stroke, points });

  const legend = document.getElementById('legend');
  [['9E', '#636efa'], ['AA', '#ef553b'], ['AS', '#00cc96'], ['B6', '#ab63fa'], ['DL', '#ffa15a'], ['EV', '#19d3f3'], ['F9', '#ff6692'],
   ['HA', '#b6e880'], ['MQ', '#ff97ff'], ['NK', '#fecb52'], ['OH', '#636efa'], ['OO', '#ef553b'], ['UA', '#00cc96']].forEach(([code, color], i) => {
    const y = 624 + i * 18.8;
    add(legend, 'line', { x1: 1291, x2: 1320, y1: y, y2: y, stroke: color, 'stroke-width': 3.2, 'stroke-opacity': .8 });
    add(legend, 'text', { x: 1325, y: y + 5 }, code);
  });
})();
```
